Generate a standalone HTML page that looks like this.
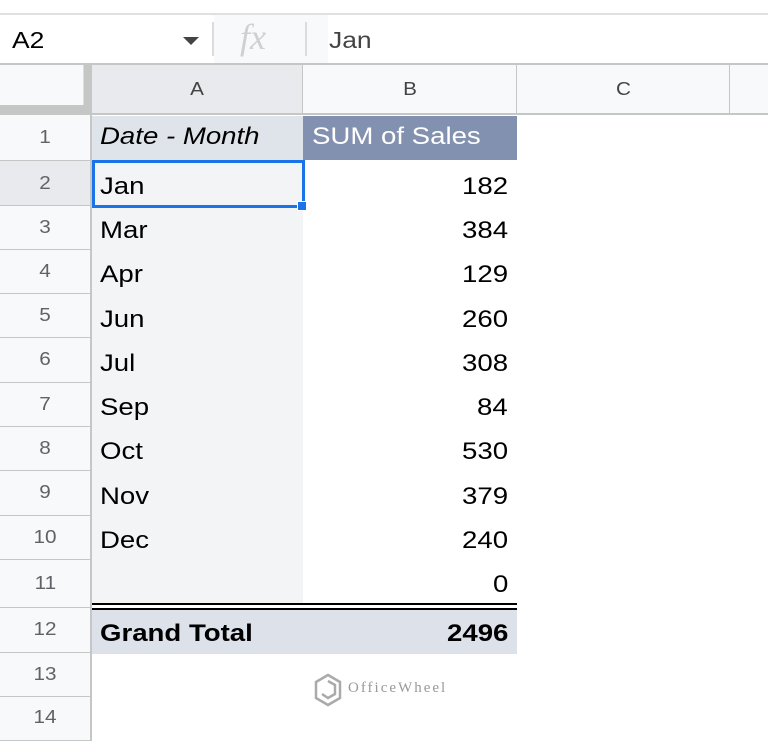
<!DOCTYPE html>
<html><head><style>
body{margin:0;width:768px;height:728px;overflow:hidden;background:#fff;font-family:"Liberation Sans",Arial,sans-serif;position:relative}
div{position:absolute;box-sizing:border-box}
span{display:inline-block;transform:scaleX(1.15);transform-origin:left center}
.b span{transform-origin:right center}
.rh span,.ch span{transform-origin:center}
.rh{left:0;width:92px;background:#f8f9fa;border-right:2px solid #c4c7c5;border-bottom:1px solid #c4c7c5;color:#5f6368;font-size:18px;text-align:center}
.a{left:92px;width:211px;background:#f3f4f6;font-size:24px;color:#000;padding-left:8px}
.b{left:303px;width:214px;font-size:24px;color:#000;text-align:right;padding-right:9px}
.ch{top:65px;height:48px;border-right:1px solid #c4c7c5;color:#444;font-size:18px;text-align:center;line-height:48px}
</style></head><body>
<div style="left:0;top:13px;width:768px;height:2px;background:#e0e0e0"></div>
<div style="left:0;top:15px;width:768px;height:48px;background:#fff"></div>
<div style="left:12px;top:27px;font-size:23px;color:#000"><span>A2</span></div>
<div style="left:183px;top:37px;width:0;height:0;border-left:8px solid transparent;border-right:8px solid transparent;border-top:8px solid #444"></div>
<div style="left:212px;top:22px;width:2px;height:34px;background:#dadce0"></div>
<div style="left:214px;top:15px;width:114px;height:48px;background:#f8f9fa"></div>
<div style="left:240px;top:16px;font-size:36px;font-style:italic;font-family:'Liberation Serif',serif;color:#d0d0d0">fx</div>
<div style="left:305px;top:22px;width:2px;height:34px;background:#dadce0"></div>
<div style="left:329px;top:27px;font-size:23px;color:#444"><span>Jan</span></div>
<div style="left:0;top:63px;width:768px;height:2px;background:#c4c7c5"></div>
<div style="left:0;top:65px;width:768px;height:50px;background:#f8f9fa;border-bottom:2px solid #c4c7c5"></div>
<div style="left:0;top:65px;width:84px;height:40px;background:#f8f9fa;border-right:1px solid #ddd"></div>
<div style="left:84px;top:65px;width:8px;height:50px;background:#c4c7c5"></div>
<div style="left:0;top:105px;width:92px;height:10px;background:#c4c7c5"></div>
<div class="ch" style="left:92px;width:211px;background:#e8eaed"><span>A</span></div>
<div class="ch" style="left:304px;width:213px"><span>B</span></div>
<div class="ch" style="left:517px;width:213px"><span>C</span></div>

<div class="rh" style="top:115px;height:46px;line-height:44px"><span>1</span></div>
<div class="rh" style="top:161px;height:45px;line-height:44px;background:#e8eaed"><span>2</span></div>
<div class="rh" style="top:206px;height:44px;line-height:43px"><span>3</span></div>
<div class="rh" style="top:250px;height:44px;line-height:43px"><span>4</span></div>
<div class="rh" style="top:294px;height:44px;line-height:43px"><span>5</span></div>
<div class="rh" style="top:338px;height:45px;line-height:43px"><span>6</span></div>
<div class="rh" style="top:383px;height:44px;line-height:43px"><span>7</span></div>
<div class="rh" style="top:427px;height:44px;line-height:43px"><span>8</span></div>
<div class="rh" style="top:471px;height:45px;line-height:43px"><span>9</span></div>
<div class="rh" style="top:516px;height:44px;line-height:43px"><span>10</span></div>
<div class="rh" style="top:560px;height:48px;line-height:46px"><span>11</span></div>
<div class="rh" style="top:608px;height:45px;line-height:43px"><span>12</span></div>
<div class="rh" style="top:653px;height:44px;line-height:43px"><span>13</span></div>
<div class="rh" style="top:697px;height:44px;line-height:40px"><span>14</span></div>

<div class="a" style="top:116px;height:44px;line-height:42px;background:#dfe3ea;font-style:italic"><span>Date - Month</span></div>
<div style="left:303px;top:116px;width:214px;height:44px;background:#8391b0;color:#fff;font-size:24px;padding-left:9px;line-height:42px"><span>SUM of Sales</span></div>

<div class="a" style="top:160px;height:444px"></div>
<div class="a" style="top:165px;line-height:44px"><span>Jan</span></div><div class="b" style="top:165px;line-height:44px"><span>182</span></div>
<div class="a" style="top:209px;line-height:44px"><span>Mar</span></div><div class="b" style="top:209px;line-height:44px"><span>384</span></div>
<div class="a" style="top:253px;line-height:44px"><span>Apr</span></div><div class="b" style="top:253px;line-height:44px"><span>129</span></div>
<div class="a" style="top:298px;line-height:44px"><span>Jun</span></div><div class="b" style="top:298px;line-height:44px"><span>260</span></div>
<div class="a" style="top:342px;line-height:44px"><span>Jul</span></div><div class="b" style="top:342px;line-height:44px"><span>308</span></div>
<div class="a" style="top:386px;line-height:44px"><span>Sep</span></div><div class="b" style="top:386px;line-height:44px"><span>84</span></div>
<div class="a" style="top:430px;line-height:44px"><span>Oct</span></div><div class="b" style="top:430px;line-height:44px"><span>530</span></div>
<div class="a" style="top:475px;line-height:44px"><span>Nov</span></div><div class="b" style="top:475px;line-height:44px"><span>379</span></div>
<div class="a" style="top:519px;line-height:44px"><span>Dec</span></div><div class="b" style="top:519px;line-height:44px"><span>240</span></div>
<div class="b" style="top:563px;line-height:44px"><span>0</span></div>

<div style="left:92px;top:603px;width:425px;height:2px;background:#000"></div>
<div style="left:92px;top:608px;width:425px;height:2px;background:#000"></div>
<div style="left:92px;top:610px;width:425px;height:44px;background:#dde2ea"></div>
<div class="a" style="top:612px;line-height:44px;background:transparent;font-weight:bold"><span>Grand Total</span></div>
<div class="b" style="top:612px;line-height:44px;font-weight:bold"><span>2496</span></div>

<div style="left:92px;top:160px;width:213px;height:48px;border:3px solid #1a73e8"></div>
<div style="left:297px;top:201px;width:10px;height:10px;background:#1a73e8;border:1px solid #fff"></div>

<svg style="position:absolute;left:312px;top:672px" width="32" height="36" viewBox="0 0 32 36"><g fill="none" stroke="#aaa" stroke-width="2.5"><path d="M16 3 L28 10 V26 L16 33 L4 26 V10 Z"/><path d="M16 9 L23 13 V22 L16 26 L10 22"/></g></svg>
<div style="left:348px;top:680px;font-size:15px;letter-spacing:2px;color:#999;font-family:'Liberation Serif',serif">OfficeWheel</div>
</body></html>
